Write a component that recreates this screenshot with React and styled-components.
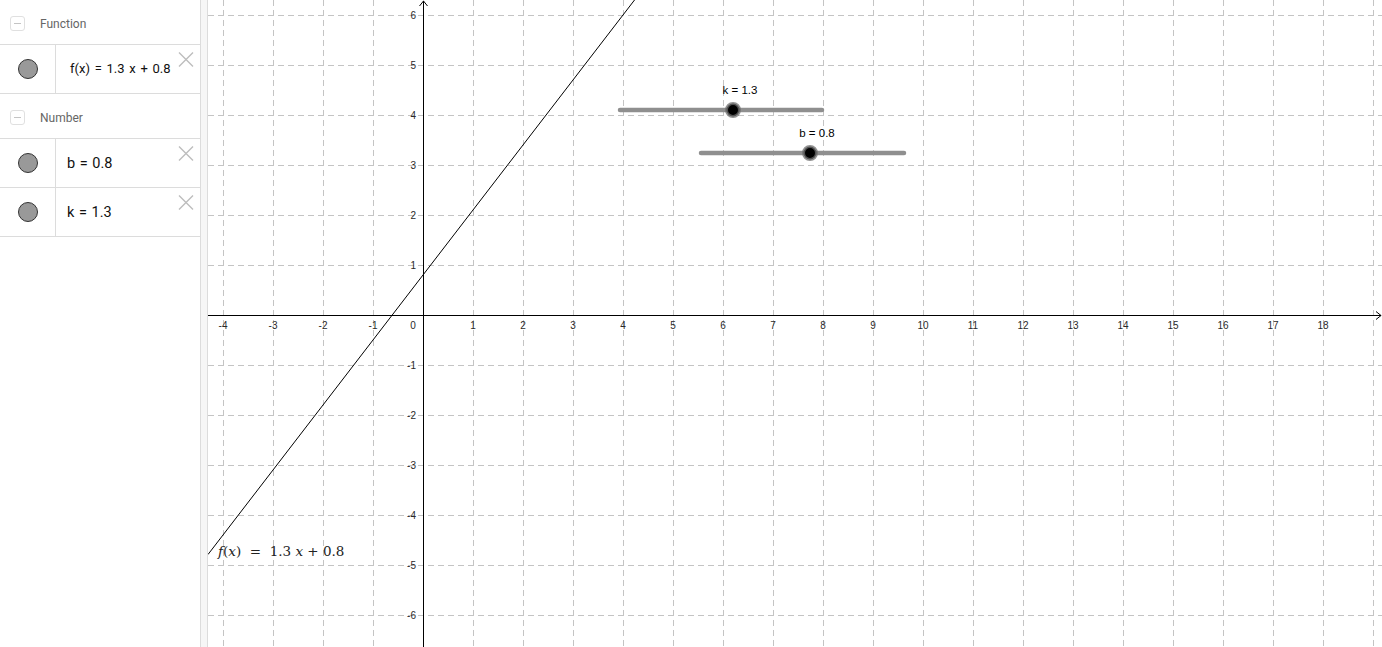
import React from 'react';
import styled, { createGlobalStyle } from 'styled-components';

const X0 = 423;
const Y0 = 315;
const U = 50;
const px = (x) => X0 + x * U;
const py = (y) => Y0 - y * U;

const GlobalStyle = createGlobalStyle`
  html, body {
    margin: 0;
    padding: 0;
    height: 100%;
    overflow: hidden;
    background: #fff;
  }
  #root {
    height: 100%;
  }
`;

const groups = [
  {
    title: 'Function',
    items: [{ id: 'f', text: 'f(x) = 1.3 x + 0.8', small: true }],
  },
  {
    title: 'Number',
    items: [
      { id: 'b', text: 'b = 0.8' },
      { id: 'k', text: 'k = 1.3' },
    ],
  },
];

const sliders = [
  { name: 'k', value: '1.3', x1: 620, x2: 822, y: 110, knob: 733 },
  { name: 'b', value: '0.8', x1: 701, x2: 904, y: 153, knob: 810 },
];

const range = (a, b) => Array.from({ length: b - a + 1 }, (_, i) => a + i);

const App = () => {
  return (
    <Page>
      <GlobalStyle />
      <Algebra>
        {groups.map((g) => (
          <Group key={g.title}>
            <GroupHeader>
              <CollapseBox />
              <GroupTitle>{g.title}</GroupTitle>
            </GroupHeader>
            {g.items.map((item) => (
              <Row key={item.id}>
                <MarbleCell>
                  <Marble />
                </MarbleCell>
                <Definition $small={item.small}>{item.text}</Definition>
                <DeleteButton aria-label='delete'>
                  <svg width='16' height='15' viewBox='0 0 16 15'>
                    <path d='M1 0.5 L15 14.5 M15 0.5 L1 14.5' stroke='#bdbdbd' strokeWidth='1.4' fill='none' />
                  </svg>
                </DeleteButton>
              </Row>
            ))}
          </Group>
        ))}
      </Algebra>

      <Splitter />

      <Graphics>
        <svg width='1174' height='647' viewBox='208 0 1174 647'>
          <g stroke='#c4c4c4' strokeWidth='1' strokeDasharray='6 4' shapeRendering='crispEdges'>
            {range(-4, 19).map((n) => (
              <line key={'v' + n} x1={px(n) + 0.5} y1='0' x2={px(n) + 0.5} y2='647' />
            ))}
            {range(-6, 6).map((m) => (
              <line key={'h' + m} x1='208' y1={py(m) + 0.5} x2='1382' y2={py(m) + 0.5} />
            ))}
          </g>

          <g stroke='#000' strokeWidth='1' fill='none'>
            <line x1='208' y1={Y0 + 0.5} x2='1381' y2={Y0 + 0.5} shapeRendering='crispEdges' />
            <line x1={X0 + 0.5} y1='1' x2={X0 + 0.5} y2='647' shapeRendering='crispEdges' />
            <path d={`M1376 ${Y0 - 3.5} L1381 ${Y0 + 0.5} L1376 ${Y0 + 4.5}`} />
            <path d={`M${X0 - 3.5} 6 L${X0 + 0.5} 1 L${X0 + 4.5} 6`} />
          </g>

          <g fontFamily='"Liberation Sans", Arial, sans-serif' fontSize='10' fill='#2a2a2a'>
            {range(-4, 18)
              .filter((n) => n !== 0)
              .map((n) => (
                <text key={'xl' + n} x={px(n)} y={Y0 + 14} textAnchor='middle'>
                  {n < 0 ? '-' + -n : n}
                </text>
              ))}
            <text x={X0 - 10} y={Y0 + 14} textAnchor='middle'>0</text>
            {range(-6, 6)
              .filter((m) => m !== 0)
              .map((m) => (
                <text key={'yl' + m} x={X0 - 7} y={py(m) + 3.5} textAnchor='end'>
                  {m < 0 ? '-' + -m : m}
                </text>
              ))}
          </g>

          <line
            x1={px(-4.3)}
            y1={py(1.3 * -4.3 + 0.8)}
            x2={px(4.4)}
            y2={py(1.3 * 4.4 + 0.8)}
            stroke='#000'
            strokeWidth='1'
          />

          <text
            x='218'
            y='556'
            fontFamily='"DejaVu Serif", "Liberation Serif", serif'
            fontSize='13.5'
            fill='#222'
            style={{ whiteSpace: 'pre' }}
          >
            <tspan fontStyle='italic'>f</tspan>(<tspan fontStyle='italic'>x</tspan>)  =  1.3 <tspan fontStyle='italic'>x</tspan> + 0.8
          </text>

          {sliders.map((s) => (
            <g key={s.name}>
              <line x1={s.x1} y1={s.y} x2={s.x2} y2={s.y} stroke='#8f8f8f' strokeWidth='4.5' strokeLinecap='round' />
              <circle cx={s.knob} cy={s.y} r='6.5' fill='#000' stroke='rgba(110,110,110,0.75)' strokeWidth='3' />
              <text
                x={s.knob + 7}
                y={s.y - 16}
                textAnchor='middle'
                fontFamily='"Liberation Sans", Arial, sans-serif'
                fontSize='11.5'
                fill='#000'
              >
                {s.name} = {s.value}
              </text>
            </g>
          ))}
        </svg>
      </Graphics>
    </Page>
  );
};

const Page = styled.div`
  display: flex;
  width: 100vw;
  height: 100vh;
  overflow: hidden;
`;

const Algebra = styled.div`
  display: flex;
  flex-direction: column;
  flex: 0 0 201px;
  box-sizing: border-box;
  border-right: 1px solid #dcdcdc;
  background: #fff;
  font-family: Roboto, 'Noto Sans', sans-serif;
`;

const Group = styled.div`
  display: flex;
  flex-direction: column;
  border-bottom: 1px solid #dcdcdc;
`;

const GroupHeader = styled.div`
  display: flex;
  align-items: center;
  height: 44px;
  box-sizing: border-box;
  padding: 3px 0 0 10px;
`;

const CollapseBox = styled.div`
  position: relative;
  width: 15px;
  height: 15px;
  box-sizing: border-box;
  border: 1px solid #e0e0e0;
  border-radius: 3px;

  &::after {
    content: '';
    position: absolute;
    left: 3px;
    right: 3px;
    top: 6px;
    height: 1px;
    background: #c4c4c4;
  }
`;

const GroupTitle = styled.span`
  margin-left: 15px;
  font-size: 12px;
  color: #666;
`;

const Row = styled.div`
  display: flex;
  align-items: stretch;
  height: 48px;
  border-top: 1px solid #dcdcdc;
`;

const MarbleCell = styled.div`
  display: flex;
  align-items: center;
  justify-content: center;
  flex: 0 0 56px;
  box-sizing: border-box;
  border-right: 1px solid #dcdcdc;
`;

const Marble = styled.div`
  width: 20px;
  height: 20px;
  box-sizing: border-box;
  border-radius: 50%;
  background: #999;
  border: 1px solid #333;
`;

const Definition = styled.div`
  display: flex;
  align-items: center;
  flex: 1;
  padding-left: ${(p) => (p.$small ? '14px' : '11px')};
  padding-bottom: ${(p) => (p.$small ? '2px' : '0')};
  font-size: ${(p) => (p.$small ? '13px' : '14.5px')};
  color: #111;
  white-space: nowrap;
  word-spacing: ${(p) => (p.$small ? '1.5px' : '1px')};
`;

const DeleteButton = styled.div`
  flex: 0 0 auto;
  margin: 7px 6px 0 0;
  height: 15px;
  display: flex;
`;

const Splitter = styled.div`
  flex: 0 0 6px;
  background: #f6f6f6;
  border-right: 1px solid #dcdcdc;
`;

const Graphics = styled.div`
  flex: 1;
  overflow: hidden;
  background: #fff;
`;

export default App;
